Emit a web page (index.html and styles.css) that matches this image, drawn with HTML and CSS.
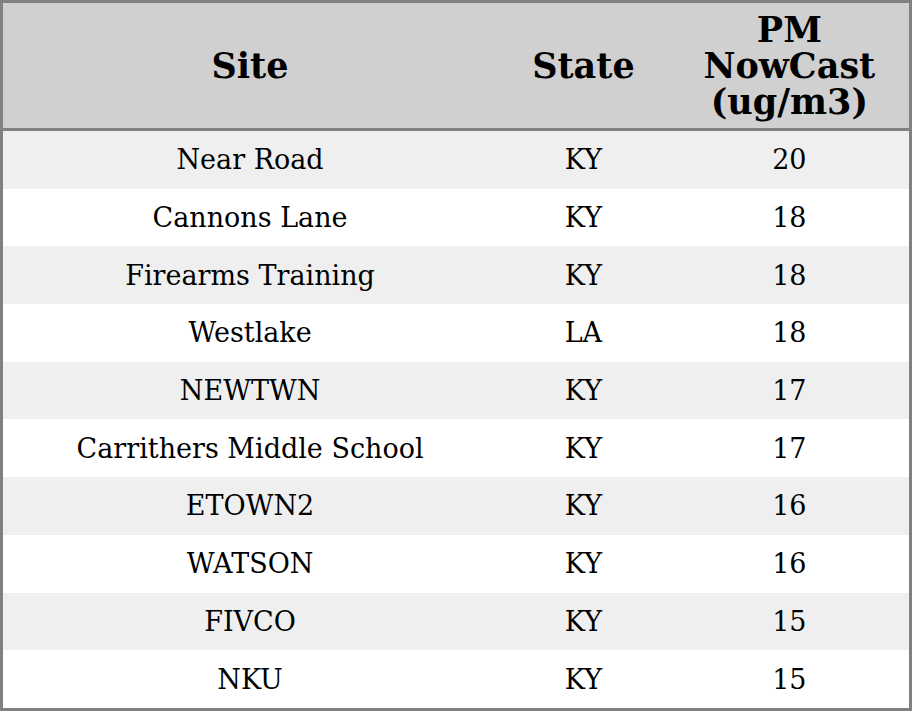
FILE: index.html
```html
<!DOCTYPE html>
<html>
<head>
<meta charset="utf-8">
<link rel="stylesheet" href="styles.css">
</head>
<body>
<table class="aq-table">
  <colgroup>
    <col class="col-site">
    <col class="col-state">
    <col class="col-pm">
  </colgroup>
  <thead>
    <tr>
      <th>Site</th>
      <th>State</th>
      <th>PM<br>NowCast<br>(ug/m3)</th>
    </tr>
  </thead>
  <tbody>
    <tr><td>Near Road</td><td>KY</td><td>20</td></tr>
    <tr><td>Cannons Lane</td><td>KY</td><td>18</td></tr>
    <tr><td>Firearms Training</td><td>KY</td><td>18</td></tr>
    <tr><td>Westlake</td><td>LA</td><td>18</td></tr>
    <tr><td>NEWTWN</td><td>KY</td><td>17</td></tr>
    <tr><td>Carrithers Middle School</td><td>KY</td><td>17</td></tr>
    <tr><td>ETOWN2</td><td>KY</td><td>16</td></tr>
    <tr><td>WATSON</td><td>KY</td><td>16</td></tr>
    <tr><td>FIVCO</td><td>KY</td><td>15</td></tr>
    <tr><td>NKU</td><td>KY</td><td>15</td></tr>
  </tbody>
</table>
</body>
</html>
```
FILE: styles.css
```css
html, body {
  margin: 0;
  padding: 0;
  background: #ffffff;
}
.aq-table {
  width: 912px;
  height: 711px;
  border-collapse: collapse;
  border: 3px solid #808080;
  table-layout: fixed;
  font-family: "DejaVu Serif", serif;
  color: #000;
}
.col-site { width: 494px; }
.col-state { width: 172px; }
.col-pm { width: 240px; }
.aq-table th {
  background: #d0d0d0;
  font-size: 35px;
  font-weight: bold;
  line-height: 36px;
  height: 125px;
  padding: 0;
  text-align: center;
  vertical-align: middle;
  border-bottom: 3px solid #808080;
}
.aq-table td {
  font-size: 27px;
  height: 57.7px;
  padding: 0;
  text-align: center;
  vertical-align: middle;
}
.aq-table tbody tr:nth-child(odd) td {
  background: #efefef;
}
.aq-table tbody tr:nth-child(even) td {
  background: #ffffff;
}
```
